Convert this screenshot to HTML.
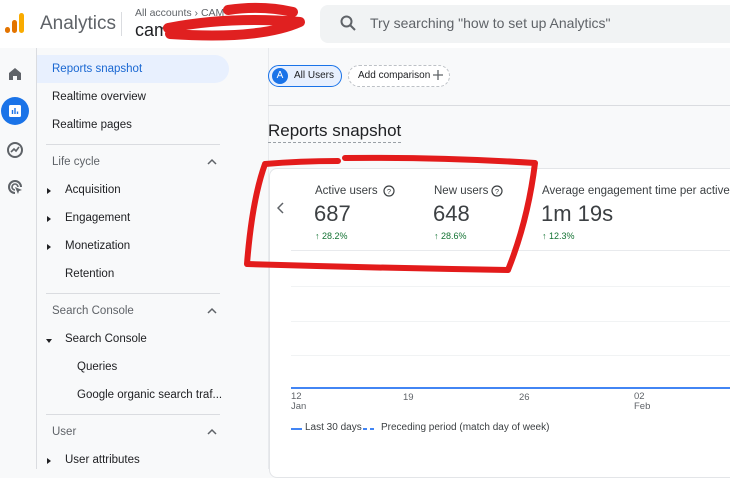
<!DOCTYPE html>
<html><head><style>
*{margin:0;padding:0;box-sizing:border-box}
body{width:730px;height:469px;overflow:hidden;background:#f8f9fa;font-family:"Liberation Sans",Arial,sans-serif;position:relative;color:#202124}
.a{position:absolute;white-space:nowrap}
.nav{font-size:11.5px;color:#202124}
.sec{font-size:11.5px;color:#5f6368}
.hr{position:absolute;height:1px;background:#dadce0}
.car{position:absolute}
.tri{position:absolute;width:0;height:0;border-top:3px solid transparent;border-bottom:3px solid transparent;border-left:4px solid #202124}
</style></head><body>
<div class="a" style="left:0;top:0;width:730px;height:48px;background:#fff"></div>
<svg class="a" style="left:5px;top:13px" width="20" height="22"><rect x="0" y="14" width="5" height="6" rx="2.5" fill="#e37400"/><rect x="7" y="7" width="5" height="13" rx="2.5" fill="#e37400"/><rect x="14" y="0" width="5" height="20" rx="2.5" fill="#f9ab00"/></svg>
<div class="a" style="left:40px;top:13px;font-size:19px;color:#5f6368">Analytics</div>
<div class="a" style="left:121px;top:12px;width:1px;height:24px;background:#dadce0"></div>
<div class="a" style="left:135px;top:7px;font-size:10.5px;color:#5f6368">All accounts › CAM</div>
<div class="a" style="left:135px;top:20px;font-size:18px;color:#202124">cam</div>
<svg class="a" style="left:0;top:0" width="320" height="48"><path d="M228 10 Q262 5 293 12 M168 28 Q230 16 300 22 Q260 40 170 34" stroke="#e02020" stroke-width="10" fill="none" stroke-linecap="round" stroke-linejoin="round"/></svg>
<div class="a" style="left:320px;top:5px;width:420px;height:38px;background:#f1f3f4;border-radius:8px"></div>
<svg class="a" style="left:340px;top:15px" width="16" height="16"><circle cx="6.5" cy="6.5" r="5" stroke="#5f6368" stroke-width="2" fill="none"/><path d="M10 10 L15 15" stroke="#5f6368" stroke-width="2"/></svg>
<div class="a" style="left:370px;top:15px;font-size:14px;color:#5f6368">Try searching "how to set up Analytics"</div>
<div class="a" style="left:36px;top:48px;width:1px;height:421px;background:#dadce0"></div>
<svg class="a" style="left:7px;top:66px" width="16" height="16"><path d="M2 14V7L8 2 14 7V14H10V10H6V14Z" fill="#5f6368"/></svg>
<div class="a" style="left:1px;top:97px;width:28px;height:28px;border-radius:50%;background:#1a73e8"></div>
<svg class="a" style="left:8px;top:104px" width="14" height="14"><rect x="1" y="1" width="12" height="12" rx="1.5" fill="#fff"/><path d="M4.5 10V6M7 10V4M9.5 10V7.5" stroke="#1a73e8" stroke-width="1.4"/></svg>
<svg class="a" style="left:6px;top:141px" width="18" height="18"><circle cx="9" cy="9" r="7" stroke="#5f6368" stroke-width="2" fill="none"/><path d="M5 11L8 8 10 10 13 6" stroke="#5f6368" stroke-width="1.6" fill="none"/></svg>
<svg class="a" style="left:6px;top:178px" width="18" height="18"><path d="M9 15A6 6 0 1 1 15 9" stroke="#5f6368" stroke-width="2" fill="none"/><path d="M9 12A3 3 0 1 1 12 9" stroke="#5f6368" stroke-width="1.6" fill="none"/><path d="M9 9L16 12 13 13 12 16Z" fill="#5f6368"/></svg>
<div class="a" style="left:37px;top:55px;width:192px;height:28px;background:#e8f0fe;border-radius:0 14px 14px 0"></div>
<div class="a nav" style="left:52px;top:63px;color:#1967d2">Reports snapshot</div>
<div class="a nav" style="left:52px;top:91px">Realtime overview</div>
<div class="a nav" style="left:52px;top:119px">Realtime pages</div>
<div class="hr" style="left:46px;top:144px;width:174px"></div>
<div class="a sec" style="left:52px;top:156px">Life cycle</div>
<svg class="car" style="left:207px;top:158px" width="10" height="8"><path d="M1 6L5 2 9 6" stroke="#5f6368" stroke-width="1.5" fill="none"/></svg>
<div class="tri" style="left:47px;top:188px"></div><div class="a nav" style="left:65px;top:184px">Acquisition</div>
<div class="tri" style="left:47px;top:216px"></div><div class="a nav" style="left:65px;top:212px">Engagement</div>
<div class="tri" style="left:47px;top:244px"></div><div class="a nav" style="left:65px;top:240px">Monetization</div>
<div class="a nav" style="left:65px;top:268px">Retention</div>
<div class="hr" style="left:46px;top:293px;width:174px"></div>
<div class="a sec" style="left:52px;top:305px">Search Console</div>
<svg class="car" style="left:207px;top:307px" width="10" height="8"><path d="M1 6L5 2 9 6" stroke="#5f6368" stroke-width="1.5" fill="none"/></svg>
<div class="a" style="left:46px;top:339px;border-left:3px solid transparent;border-right:3px solid transparent;border-top:4px solid #202124"></div>
<div class="a nav" style="left:65px;top:333px">Search Console</div>
<div class="a nav" style="left:77px;top:361px">Queries</div>
<div class="a nav" style="left:77px;top:389px">Google organic search traf...</div>
<div class="hr" style="left:46px;top:414px;width:174px"></div>
<div class="a sec" style="left:52px;top:426px">User</div>
<svg class="car" style="left:207px;top:428px" width="10" height="8"><path d="M1 6L5 2 9 6" stroke="#5f6368" stroke-width="1.5" fill="none"/></svg>
<div class="tri" style="left:47px;top:458px"></div><div class="a nav" style="left:65px;top:454px">User attributes</div>
<div class="a" style="left:268px;top:48px;width:1px;height:421px;background:#e8eaed"></div>
<div class="a" style="left:268px;top:65px;width:74px;height:22px;border:1px solid #1a73e8;border-radius:11px;background:#e8f0fe"></div>
<div class="a" style="left:272px;top:68px;width:16px;height:16px;border-radius:50%;background:#1a73e8;color:#fff;font-size:10px;text-align:center;line-height:16px">A</div>
<div class="a" style="left:294px;top:70px;font-size:10px">All Users</div>
<div class="a" style="left:348px;top:65px;width:102px;height:22px;border:1px dashed #bdc1c6;border-radius:11px;background:#fff"></div>
<div class="a" style="left:358px;top:70px;font-size:10px">Add comparison</div>
<svg class="a" style="left:432px;top:69px" width="12" height="12"><path d="M6 1V11M1 6H11" stroke="#5f6368" stroke-width="1.3"/></svg>
<div class="hr" style="left:268px;top:105px;width:462px"></div>
<div class="a" style="left:268px;top:121px;font-size:17px;color:#202124;border-bottom:1px dashed #9aa0a6;padding-bottom:1px">Reports snapshot</div>
<div class="a" style="left:269px;top:168px;width:470px;height:310px;background:#fff;border:1px solid #e3e5e8;border-radius:8px"></div>
<svg class="a" style="left:277px;top:202px" width="8" height="12"><path d="M6 1L1 6 6 11" stroke="#5f6368" stroke-width="1.5" fill="none"/></svg>
<div class="a" style="left:315px;top:185px;font-size:11.5px;color:#3c4043">Active users</div>
<svg class="a" style="left:383px;top:185px" width="12" height="12"><circle cx="6" cy="6" r="5" stroke="#3c4043" stroke-width="1.2" fill="none"/><text x="6" y="9" font-size="7.5" text-anchor="middle" fill="#3c4043" font-family="Liberation Sans">?</text></svg>
<div class="a" style="left:314px;top:201px;font-size:22px;color:#3c4043">687</div>
<div class="a" style="left:315px;top:231px;font-size:9px;color:#137333">↑ 28.2%</div>
<div class="a" style="left:434px;top:185px;font-size:11.5px;color:#3c4043">New users</div>
<svg class="a" style="left:491px;top:185px" width="12" height="12"><circle cx="6" cy="6" r="5" stroke="#3c4043" stroke-width="1.2" fill="none"/><text x="6" y="9" font-size="7.5" text-anchor="middle" fill="#3c4043" font-family="Liberation Sans">?</text></svg>
<div class="a" style="left:433px;top:201px;font-size:22px;color:#3c4043">648</div>
<div class="a" style="left:434px;top:231px;font-size:9px;color:#137333">↑ 28.6%</div>
<div class="a" style="left:542px;top:185px;font-size:11.5px;color:#3c4043">Average engagement time per active</div>
<div class="a" style="left:541px;top:201px;font-size:22px;color:#3c4043">1m 19s</div>
<div class="a" style="left:542px;top:231px;font-size:9px;color:#137333">↑ 12.3%</div>
<div class="hr" style="left:291px;top:250px;width:439px;background:#e8eaed"></div>
<div class="hr" style="left:291px;top:286px;width:439px;background:#f1f3f4"></div>
<div class="hr" style="left:291px;top:321px;width:439px;background:#f1f3f4"></div>
<div class="hr" style="left:291px;top:355px;width:439px;background:#f1f3f4"></div>
<div class="a" style="left:291px;top:387px;width:439px;height:2px;background:#4285f4"></div>
<div class="a" style="left:291px;top:392px;font-size:9.5px;color:#5f6368;line-height:10px">12<br>Jan</div>
<div class="a" style="left:403px;top:392px;font-size:9.5px;color:#5f6368">19</div>
<div class="a" style="left:519px;top:392px;font-size:9.5px;color:#5f6368">26</div>
<div class="a" style="left:634px;top:392px;font-size:9.5px;color:#5f6368;line-height:10px">02<br>Feb</div>
<div class="a" style="left:291px;top:428px;width:11px;height:2px;background:#4285f4"></div>
<div class="a" style="left:305px;top:422px;font-size:10px;color:#3c4043">Last 30 days</div>
<div class="a" style="left:363px;top:428px;width:4px;height:2px;background:#4285f4"></div>
<div class="a" style="left:370px;top:428px;width:4px;height:2px;background:#4285f4"></div>
<div class="a" style="left:381px;top:422px;font-size:10px;color:#3c4043">Preceding period (match day of week)</div>
<svg class="a" style="left:0;top:0" width="730" height="469"><path d="M338 161 Q300 161 265 164 Q252 200 247 264 Q380 268 508 270 Q528 220 535 163 Q440 157 345 158" stroke="#e31b1b" stroke-width="6" fill="none" stroke-linejoin="round" stroke-linecap="round"/></svg>
</body></html>
